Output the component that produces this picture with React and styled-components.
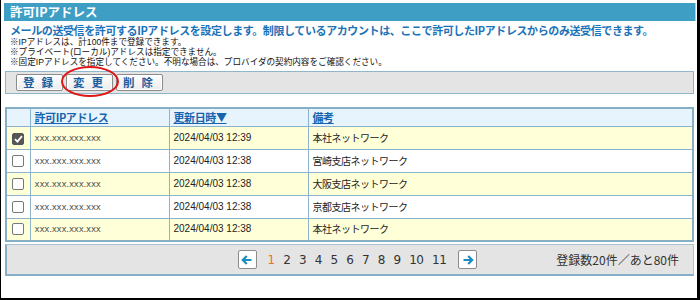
import React from "react";
import styled, { createGlobalStyle } from "styled-components";

const GlobalStyle = createGlobalStyle`
  html, body {
    margin: 0;
    padding: 0;
    background: #fff;
  }
  body {
    font-family: "Liberation Sans", "Noto Sans CJK JP", sans-serif;
    color: #333;
  }
`;

const rows = [
  { ip: "xxx.xxx.xxx.xxx", date: "2024/04/03 12:39", note: "本社ネットワーク", checked: true },
  { ip: "xxx.xxx.xxx.xxx", date: "2024/04/03 12:38", note: "宮崎支店ネットワーク" },
  { ip: "xxx.xxx.xxx.xxx", date: "2024/04/03 12:38", note: "大阪支店ネットワーク" },
  { ip: "xxx.xxx.xxx.xxx", date: "2024/04/03 12:38", note: "京都支店ネットワーク" },
  { ip: "xxx.xxx.xxx.xxx", date: "2024/04/03 12:38", note: "本社ネットワーク" },
];

const pages = [1, 2, 3, 4, 5, 6, 7, 8, 9, 10, 11];

const App = () => {
  return (
    <>
      <GlobalStyle />
      <Frame>
        <TitleBar>許可IPアドレス</TitleBar>
        <Lead>
          メールの送受信を許可するIPアドレスを設定します。制限しているアカウントは、ここで許可したIPアドレスからのみ送受信できます。
        </Lead>
        <Notes>
          <li>※IPアドレスは、計100件まで登録できます。</li>
          <li>※プライベート(ローカル)アドレスは指定できません。</li>
          <li>※固定IPアドレスを指定してください。不明な場合は、プロバイダの契約内容をご確認ください。</li>
        </Notes>

        <Toolbar>
          <ActionButton>登録</ActionButton>
          <Marked>
            <ActionButton>変更</ActionButton>
            <RedCircle />
          </Marked>
          <ActionButton>削除</ActionButton>
        </Toolbar>

        <Table>
          <colgroup>
            <col style={{ width: 24 }} />
            <col style={{ width: 139 }} />
            <col style={{ width: 139 }} />
            <col />
          </colgroup>
          <thead>
            <HeadRow>
              <Th />
              <Th>
                <HeadLink>許可IPアドレス</HeadLink>
              </Th>
              <Th>
                <HeadLink>更新日時▼</HeadLink>
              </Th>
              <Th>
                <HeadLink>備考</HeadLink>
              </Th>
            </HeadRow>
          </thead>
          <tbody>
            {rows.map((r, i) => (
              <Row key={i} $odd={i % 2 === 0}>
                <CheckCell>
                  <Check $checked={r.checked}>
                    {r.checked && (
                      <svg width="9" height="8" viewBox="0 0 9 8">
                        <path
                          d="M1 4.2 L3.4 6.6 L8 1.2"
                          fill="none"
                          stroke="#fff"
                          strokeWidth="1.8"
                        />
                      </svg>
                    )}
                  </Check>
                </CheckCell>
                <IpCell>{r.ip}</IpCell>
                <DateCell>{r.date}</DateCell>
                <NoteCell>{r.note}</NoteCell>
              </Row>
            ))}
          </tbody>
        </Table>

        <Footer>
          <Pager>
            <ArrowButton>
              <svg width="12" height="12" viewBox="0 0 12 12">
                <path
                  d="M10.5 6 H2 M5.8 2 L1.8 6 L5.8 10"
                  fill="none"
                  stroke="#1b8bc2"
                  strokeWidth="2.2"
                />
              </svg>
            </ArrowButton>
            {pages.map((p) => (
              <PageNum key={p} $current={p === 1}>
                {p}
              </PageNum>
            ))}
            <ArrowButton>
              <svg width="12" height="12" viewBox="0 0 12 12">
                <path
                  d="M1.5 6 H10 M6.2 2 L10.2 6 L6.2 10"
                  fill="none"
                  stroke="#1b8bc2"
                  strokeWidth="2.2"
                />
              </svg>
            </ArrowButton>
          </Pager>
          <Count>登録数20件／あと80件</Count>
        </Footer>
      </Frame>
    </>
  );
};

const Frame = styled.div`
  box-sizing: border-box;
  width: 700px;
  height: 300px;
  border-left: 1px solid #000;
  border-right: 3px solid #000;
  border-bottom: 2px solid #000;
  padding: 3px 1px 0 3px;
  display: flex;
  flex-direction: column;
`;

const TitleBar = styled.div`
  height: 18px;
  line-height: 18px;
  background: #3e9ec4;
  border-right: 1px solid #a9d3e4;
  color: #fff;
  font-family: "Noto Sans CJK JP", sans-serif;
  font-size: 12.5px;
  font-weight: 700;
  padding-left: 6px;
`;

const Lead = styled.p`
  margin: 2px 0 0 6px;
  font-family: "Noto Sans CJK JP", sans-serif;
  font-size: 11px;
  letter-spacing: -0.4px;
  line-height: 14px;
  font-weight: 700;
  color: #1b72b8;
  white-space: nowrap;
`;

/* primary font is Liberation so the inline box stays within the 10px line */
const Notes = styled.ul`
  list-style: none;
  margin: 0 0 0 6px;
  padding: 0;
  font-family: "Liberation Sans", "Noto Sans CJK JP", sans-serif;
  font-size: 8.6px;
  line-height: 10px;
  color: #111;
  li {
    height: 10px;
  }
`;

const Toolbar = styled.div`
  box-sizing: border-box;
  margin: 4px 2px 0 1px;
  height: 23px;
  background: #e4e4e4;
  border: 1px solid #8fb6cb;
  display: flex;
  align-items: center;
  gap: 3px;
  padding-left: 10px;
`;

const Marked = styled.div`
  position: relative;
  display: flex;
`;

const RedCircle = styled.span`
  box-sizing: border-box;
  position: absolute;
  left: -5px;
  top: -8px;
  width: 58px;
  height: 31px;
  border: 2px solid #e01515;
  border-radius: 50%;
  pointer-events: none;
`;

const ActionButton = styled.button`
  box-sizing: border-box;
  width: 47px;
  height: 17px;
  padding: 0 0 0 4px;
  background: linear-gradient(#ffffff, #ececec);
  border: 1px solid #8c8c8c;
  border-radius: 2px;
  box-shadow: inset 0 0 0 1px #fff;
  font-family: "Noto Sans CJK JP", sans-serif;
  font-size: 11.5px;
  font-weight: 700;
  letter-spacing: 7px;
  line-height: 15px;
  color: #1d5e9e;
`;

const Table = styled.table`
  margin: 13px 2px 0 1px;
  width: calc(100% - 3px);
  border-collapse: collapse;
  table-layout: fixed;
  border: 2px solid #86afc6;
`;

const HeadRow = styled.tr`
  height: 18px;
  background: #e8f4fd;
`;

const Th = styled.th`
  padding: 0 4px;
  border: 1px solid #8bb3ca;
  text-align: left;
  vertical-align: middle;
  line-height: 14px;
`;

const HeadLink = styled.a`
  font-family: "Noto Sans CJK JP", sans-serif;
  font-size: 11px;
  letter-spacing: -0.4px;
  font-weight: 700;
  color: #1565ae;
  text-decoration: underline;
  cursor: pointer;
`;

const Row = styled.tr`
  height: 23px;
  background: ${(p) => (p.$odd ? "#ffffd8" : "#fff")};
`;

const Cell = styled.td`
  border: 1px solid #8bb3ca;
  padding: 0 4px;
  vertical-align: middle;
  white-space: nowrap;
  overflow: hidden;
  line-height: 14px;
`;

const CheckCell = styled(Cell)`
  padding: 0;
  text-align: center;
`;

const Check = styled.span`
  box-sizing: border-box;
  display: inline-flex;
  align-items: center;
  justify-content: center;
  width: 12px;
  height: 12px;
  margin-top: 2px;
  border-radius: 2px;
  border: 1px solid ${(p) => (p.$checked ? "#555" : "#777")};
  background: ${(p) => (p.$checked ? "#555" : "#fff")};
`;

const IpCell = styled(Cell)`
  font-family: "DejaVu Sans", sans-serif;
  font-size: 8.6px;
  color: #555;
  letter-spacing: -0.2px;
`;

const DateCell = styled(Cell)`
  font-family: "Liberation Sans", sans-serif;
  font-size: 10px;
  color: #222;
`;

const NoteCell = styled(Cell)`
  font-family: "Noto Sans CJK JP", sans-serif;
  font-size: 10px;
  letter-spacing: -0.5px;
  color: #222;
`;

const Footer = styled.div`
  box-sizing: border-box;
  margin: 2px 2px 0 1px;
  height: 32px;
  background: #e4e4e4;
  border: 1px solid #a8c3d3;
  border-left: 2px solid #86afc6;
  border-bottom: 2px solid #86afc6;
  display: flex;
  align-items: center;
  justify-content: flex-end;
  padding-right: 14px;
`;

const Pager = styled.div`
  display: flex;
  align-items: center;
  margin-right: 79px;
`;

const ArrowButton = styled.button`
  box-sizing: border-box;
  width: 19px;
  height: 19px;
  padding: 0;
  display: flex;
  align-items: center;
  justify-content: center;
  background: #fff;
  border: 1px solid #8c8c8c;
  border-radius: 2px;
`;

const PageNum = styled.span`
  font-family: "DejaVu Sans", sans-serif;
  font-size: 12px;
  color: ${(p) => (p.$current ? "#f07414" : "#333")};
  margin: 0 4.3px;
  letter-spacing: -0.5px;
  &:first-of-type {
    margin-left: 11px;
  }
  &:last-of-type {
    margin-right: 12px;
  }
`;

const Count = styled.span`
  font-family: "Noto Sans CJK JP", sans-serif;
  font-size: 12px;
  color: #333;
`;

export default App;
